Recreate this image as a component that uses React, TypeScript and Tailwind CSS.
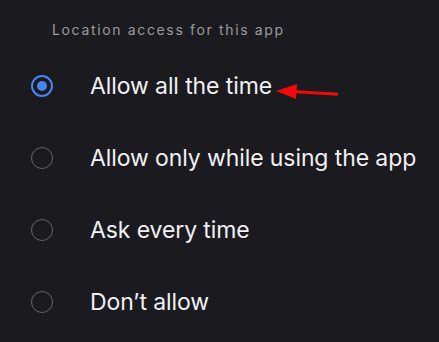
import * as React from "react";

type Option = { label: string; selected?: boolean };

const options: Option[] = [
  { label: "Allow all the time", selected: true },
  { label: "Allow only while using the app" },
  { label: "Ask every time" },
  { label: "Don\u2019t allow" },
];

/* ---------------- Radio ---------------- */

const Radio = ({ selected }: { selected?: boolean }) =>
  selected ? (
    <span className="flex h-[22px] w-[22px] items-center justify-center rounded-full border-2 border-[#4a84f0]">
      <span className="h-[10px] w-[10px] rounded-full bg-[#4a84f0]" />
    </span>
  ) : (
    <span className="h-[22px] w-[22px] rounded-full border-[1.5px] border-[#66666a]" />
  );

/* ---------------- Arrow ---------------- */

const Arrow = () => (
  <svg
    className="absolute left-[276px] top-[83px]"
    width="64"
    height="18"
    viewBox="0 0 64 18"
  >
    <line x1="16" y1="8.6" x2="62" y2="11.2" stroke="#f20a0a" strokeWidth="3" />
    <polygon points="0,8 21,1 20,16" fill="#f20a0a" />
  </svg>
);

/* ---------------- App ---------------- */

export default function App() {
  return (
    <div className="relative h-[342px] w-[439px] overflow-hidden bg-[#1b1a1f] font-['Inter',sans-serif]">
      <div className="flex h-[50px] items-center pl-[52px] pt-[9px] text-[14px] tracking-[1.65px] text-[#9b9a9f]">
        Location access for this app
      </div>
      <ul>
        {options.map((o) => (
          <li key={o.label} className="flex h-[72px] items-center">
            <span className="flex w-[83px] justify-center pl-[1px]">
              <Radio selected={o.selected} />
            </span>
            <span className="pl-[7px] text-[23px] tracking-[-0.1px] text-[#f1f0f4]">{o.label}</span>
          </li>
        ))}
      </ul>
      <Arrow />
    </div>
  );
}
